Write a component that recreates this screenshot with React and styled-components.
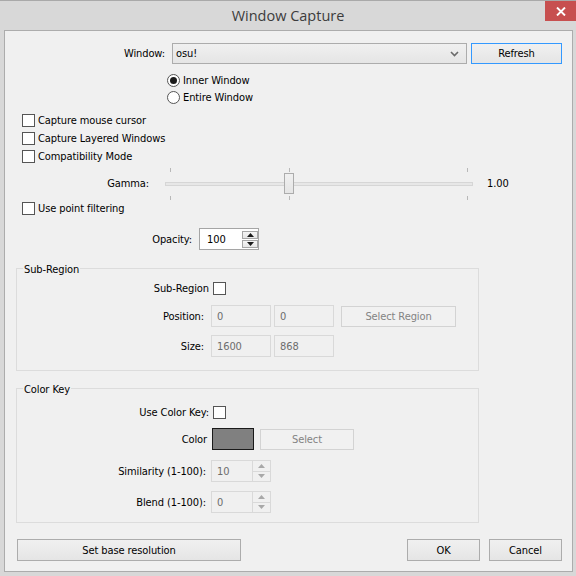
import React from "react";
import styled, { createGlobalStyle } from "styled-components";

const Global = createGlobalStyle`
  html, body { margin: 0; padding: 0; background: #d8d8d8; }
  body {
    font-family: "DejaVu Sans Condensed", "DejaVu Sans", sans-serif;
    font-size: 11px;
    letter-spacing: -0.1px;
    color: #000;
  }
`;

const Frame = styled.div`
  width: 576px;
  height: 576px;
  box-sizing: border-box;
  background: #d8d8d8;
  border-top: 1px solid #a9a9a9;
  display: flex;
  flex-direction: column;
`;

const TitleBar = styled.div`
  height: 29px;
  flex: none;
  display: grid;
  grid-template-columns: 1fr auto 1fr;
  align-items: start;
`;

const Title = styled.div`
  grid-column: 2;
  font-family: "Open Sans", "Noto Sans", sans-serif;
  font-size: 14.5px;
  letter-spacing: 0;
  line-height: 30px;
  color: #3c3c3c;
`;

const CloseButton = styled.div`
  grid-column: 3;
  justify-self: end;
  width: 31px;
  height: 20px;
  background: #c75050;
  display: flex;
  align-items: center;
  justify-content: center;
`;

const Client = styled.div`
  flex: 1;
  margin: 0 3px 4px 4px;
  border: 1px solid #acacac;
  background: #f0f0f0;
  padding: 12px 10px 0 11px;
  display: flex;
  flex-direction: column;
`;

const Row = styled.div`
  display: flex;
  align-items: center;
  flex: none;
  height: ${(p) => p.$h}px;
  margin-top: ${(p) => p.$mt || 0}px;
  padding-left: ${(p) => p.$pl || 0}px;
  gap: ${(p) => p.$gap || 0}px;
`;

const Label = styled.div`
  width: ${(p) => p.$w}px;
  flex: none;
  text-align: right;
  white-space: nowrap;
`;

const Text = styled.span`
  white-space: nowrap;
  margin-left: ${(p) => p.$ml || 0}px;
`;

const Combo = styled.div`
  width: ${(p) => p.$w}px;
  height: 21px;
  box-sizing: border-box;
  border: 1px solid #acacac;
  background: linear-gradient(#f0f0f0, #e5e5e5);
  display: flex;
  align-items: center;
  justify-content: space-between;
  padding: 0 7px 0 3px;
`;

const Button = styled.div`
  width: ${(p) => p.$w}px;
  height: ${(p) => p.$h || 22}px;
  box-sizing: border-box;
  flex: none;
  display: flex;
  align-items: center;
  justify-content: center;
  margin-left: ${(p) => p.$ml || 0}px;
  border: 1px solid
    ${(p) => (p.$primary ? "#3399ff" : p.$disabled ? "#d3d3d3" : "#acacac")};
  background: ${(p) =>
    p.$disabled ? "#f1f1f1" : "linear-gradient(#f0f0f0, #e5e5e5)"};
  color: ${(p) => (p.$disabled ? "#838383" : "#000")};
`;

const Spacer = styled.div`
  flex: 1;
`;

const CheckBox = styled.span`
  width: 13px;
  height: 13px;
  box-sizing: border-box;
  flex: none;
  border: 1px solid #555;
  background: #fff;
`;

const RadioDot = styled.span`
  width: 13px;
  height: 13px;
  box-sizing: border-box;
  flex: none;
  border-radius: 50%;
  border: 1px solid #555;
  background: #fff;
  display: flex;
  align-items: center;
  justify-content: center;
  &::after {
    content: "";
    width: 7px;
    height: 7px;
    border-radius: 50%;
    background: ${(p) => (p.$on ? "#1c1c1c" : "transparent")};
  }
`;

const Option = styled.div`
  display: flex;
  align-items: center;
  gap: 3px;
`;

const LineEdit = styled.div`
  width: ${(p) => p.$w}px;
  height: ${(p) => p.$h || 22}px;
  box-sizing: border-box;
  flex: none;
  margin-left: ${(p) => p.$ml || 0}px;
  border: 1px solid #d9d9d9;
  background: #f0f0f0;
  color: #6d6d6d;
  padding-left: 5px;
  display: flex;
  align-items: center;
`;

const SpinBox = styled.div`
  width: ${(p) => p.$w}px;
  height: 22px;
  box-sizing: border-box;
  flex: none;
  border: 1px solid ${(p) => (p.$disabled ? "#d9d9d9" : "#a5a5a5")};
  background: ${(p) => (p.$disabled ? "#f0f0f0" : "#fff")};
  display: flex;
  align-items: stretch;
`;

const SpinValue = styled.div`
  flex: 1;
  display: flex;
  align-items: center;
  padding-left: ${(p) => (p.$disabled ? 5 : 7)}px;
  color: ${(p) => (p.$disabled ? "#6d6d6d" : "#000")};
`;

const SpinStack = styled.div`
  width: ${(p) => (p.$disabled ? 17 : 16)}px;
  display: flex;
  flex-direction: column;
  gap: ${(p) => (p.$disabled ? 0 : 1)}px;
  padding: ${(p) => (p.$disabled ? "0" : "2px 0 1px 0")};
  border-left: ${(p) => (p.$disabled ? "1px solid #d9d9d9" : "none")};
`;

const SpinArrow = styled.div`
  flex: 1;
  display: flex;
  align-items: center;
  justify-content: center;
  box-sizing: border-box;
  border: ${(p) => (p.$disabled ? "none" : "1px solid #a5a5a5")};
  border-top: ${(p) =>
    p.$disabled && p.$down ? "1px solid #d9d9d9" : undefined};
  background: ${(p) =>
    p.$disabled ? "transparent" : "linear-gradient(#f5f5f5, #e6e6e6)"};
`;

const Swatch = styled.div`
  width: 42px;
  height: 22px;
  box-sizing: border-box;
  flex: none;
  border: 1px solid #1a1a1a;
  background: ${(p) => p.$color};
`;

const Slider = styled.div`
  position: relative;
  width: ${(p) => p.$w}px;
  height: 34px;
  flex: none;
`;

const Track = styled.div`
  position: absolute;
  left: 0;
  right: 0;
  top: 16px;
  height: 4px;
  box-sizing: border-box;
  border: 1px solid #d6d6d6;
  background: #e7e7e7;
`;

const Tick = styled.div`
  position: absolute;
  width: 1px;
  height: 4px;
  top: ${(p) => (p.$bottom ? 30 : 2)}px;
  background: #b8b8b8;
`;

const Thumb = styled.div`
  position: absolute;
  top: 7px;
  width: 10px;
  height: 21px;
  box-sizing: border-box;
  border: 1px solid #acacac;
  background: linear-gradient(#f0f0f0, #e5e5e5);
`;

const GroupBox = styled.div`
  position: relative;
  flex: none;
  width: ${(p) => p.$w}px;
  box-sizing: border-box;
  border: 1px solid #dcdcdc;
  margin-top: ${(p) => p.$mt}px;
  padding: ${(p) => p.$pt}px 0 ${(p) => p.$pb}px 0;
`;

const GroupTitle = styled.div`
  position: absolute;
  top: -6px;
  left: 6px;
  padding: 0 1px;
  line-height: 13px;
  background: #f0f0f0;
`;

const ButtonBar = styled.div`
  display: flex;
  align-items: center;
  gap: 9px;
  margin-top: 16px;
  height: 22px;
`;

function Chevron() {
  return (
    <svg width="9" height="6" viewBox="0 0 9 6">
      <path d="M1 1 L4.5 4.5 L8 1" fill="none" stroke="#6a6a6a" strokeWidth="1.6" />
    </svg>
  );
}

function CloseGlyph() {
  return (
    <svg width="10" height="9" viewBox="0 0 10 9">
      <path d="M1 0.5 L9 8.5 M9 0.5 L1 8.5" stroke="#fff" strokeWidth="1.9" />
    </svg>
  );
}

function Triangle({ down, color }) {
  return (
    <svg width="7" height="4" viewBox="0 0 7 4">
      <path d={down ? "M0 0 H7 L3.5 4 Z" : "M0 4 H7 L3.5 0 Z"} fill={color} />
    </svg>
  );
}

function Spin({ value, width, disabled }) {
  const color = disabled ? "#a8a8a8" : "#1a1a1a";
  return (
    <SpinBox $w={width} $disabled={disabled}>
      <SpinValue $disabled={disabled}>{value}</SpinValue>
      <SpinStack $disabled={disabled}>
        <SpinArrow $disabled={disabled}>
          <Triangle color={color} />
        </SpinArrow>
        <SpinArrow $disabled={disabled} $down>
          <Triangle down color={color} />
        </SpinArrow>
      </SpinStack>
    </SpinBox>
  );
}

function Check({ label }) {
  return (
    <Option>
      <CheckBox />
      <Text>{label}</Text>
    </Option>
  );
}

function Radio({ label, on }) {
  return (
    <Option>
      <RadioDot $on={on} />
      <Text>{label}</Text>
    </Option>
  );
}

const gamma = { min: 0, max: 2.5, value: 1.0, ticks: [0, 1.0, 2.5] };

function GammaSlider({ width }) {
  const inset = 5;
  const span = width - 2 * inset - 1;
  const at = (v) => inset + Math.round(((v - gamma.min) / (gamma.max - gamma.min)) * span);
  return (
    <Slider $w={width}>
      {gamma.ticks.map((t) => (
        <React.Fragment key={t}>
          <Tick style={{ left: at(t) }} />
          <Tick $bottom style={{ left: at(t) }} />
        </React.Fragment>
      ))}
      <Track />
      <Thumb style={{ left: at(gamma.value) - 5 }} />
    </Slider>
  );
}

export default function App() {
  return (
    <>
      <Global />
      <Frame>
        <TitleBar>
          <Title>Window Capture</Title>
          <CloseButton>
            <CloseGlyph />
          </CloseButton>
        </TitleBar>
        <Client>
          <Row $h={21} $gap={7}>
            <Label $w={149}>Window:</Label>
            <Combo $w={296}>
              <Text>osu!</Text>
              <Chevron />
            </Combo>
            <Button $w={91} $h={21} $primary $ml={-3}>
              Refresh
            </Button>
          </Row>
          <Row $h={17} $mt={8} $pl={151}>
            <Radio label="Inner Window" on />
          </Row>
          <Row $h={17} $pl={151}>
            <Radio label="Entire Window" />
          </Row>
          <Row $h={18} $mt={5} $pl={6}>
            <Check label="Capture mouse cursor" />
          </Row>
          <Row $h={18} $pl={6}>
            <Check label="Capture Layered Windows" />
          </Row>
          <Row $h={18} $pl={6}>
            <Check label="Compatibility Mode" />
          </Row>
          <Row $h={34} $mt={1} $gap={16}>
            <Label $w={133}>Gamma:</Label>
            <GammaSlider width={308} />
            <Text $ml={-2}>1.00</Text>
          </Row>
          <Row $h={16} $pl={6}>
            <Check label="Use point filtering" />
          </Row>
          <Row $h={22} $mt={12} $gap={7}>
            <Label $w={176}>Opacity:</Label>
            <Spin value="100" width={60} />
          </Row>

          <GroupBox $w={463} $mt={18} $pt={11} $pb={13}>
            <GroupTitle>Sub-Region</GroupTitle>
            <Row $h={17} $gap={4}>
              <Label $w={192}>Sub-Region</Label>
              <CheckBox />
            </Row>
            <Row $h={22} $mt={8} $gap={3}>
              <Label $w={187}>Position:</Label>
              <LineEdit $w={60} $ml={4}>0</LineEdit>
              <LineEdit $w={60}>0</LineEdit>
              <Button $w={115} $h={21} $disabled $ml={4}>
                Select Region
              </Button>
            </Row>
            <Row $h={22} $mt={8} $gap={3}>
              <Label $w={187}>Size:</Label>
              <LineEdit $w={60} $ml={4}>1600</LineEdit>
              <LineEdit $w={60}>868</LineEdit>
            </Row>
          </GroupBox>

          <GroupBox $w={463} $mt={17} $pt={15} $pb={9}>
            <GroupTitle>Color Key</GroupTitle>
            <Row $h={17} $gap={4}>
              <Label $w={192}>Use Color Key:</Label>
              <CheckBox />
            </Row>
            <Row $h={22} $mt={7} $gap={5}>
              <Label $w={190}>Color</Label>
              <Swatch $color="#808080" />
              <Button $w={94} $h={21} $disabled $ml={1}>
                Select
              </Button>
            </Row>
            <Row $h={22} $mt={10} $gap={5}>
              <Label $w={189}>Similarity (1-100):</Label>
              <Spin value="10" width={60} disabled />
            </Row>
            <Row $h={22} $mt={9} $gap={5}>
              <Label $w={189}>Blend (1-100):</Label>
              <Spin value="0" width={60} disabled />
            </Row>
          </GroupBox>

          <ButtonBar>
            <Button $w={224} $ml={1}>
              Set base resolution
            </Button>
            <Spacer />
            <Button $w={73}>OK</Button>
            <Button $w={73}>Cancel</Button>
          </ButtonBar>
        </Client>
      </Frame>
    </>
  );
}
